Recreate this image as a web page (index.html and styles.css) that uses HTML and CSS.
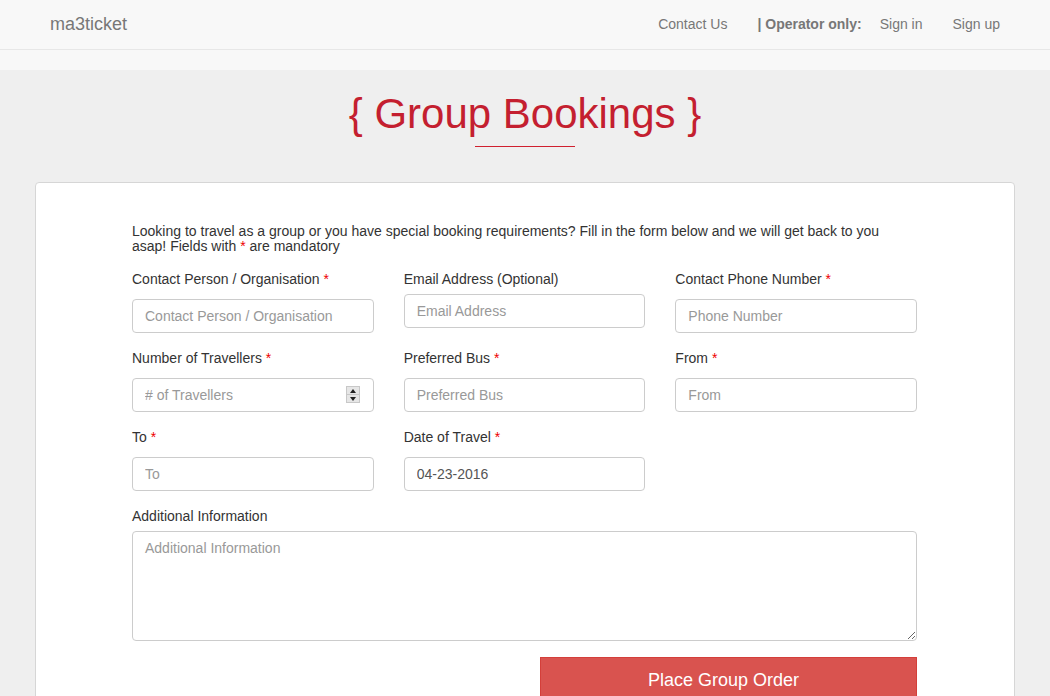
FILE: index.html
```html
<!DOCTYPE html>
<html lang="en">
<head>
<meta charset="utf-8">
<title>Group Bookings - ma3ticket</title>
<link rel="stylesheet" href="styles.css">
</head>
<body>
<nav class="navbar">
  <a class="brand" href="#">ma3ticket</a>
  <div class="nav-right">
    <a class="nav-link" href="#">Contact Us</a>
    <span class="nav-text">| Operator only:</span>
    <a class="nav-link" href="#">Sign in</a>
    <a class="nav-link" href="#">Sign up</a>
  </div>
</nav>
<main class="main">
  <h1 class="title">{ Group Bookings }</h1>
  <div class="title-rule"></div>
  <section class="card">
    <form class="form">
      <p class="intro">Looking to travel as a group or you have special booking requirements? Fill in the form below and we will get back to you asap! Fields with <span class="star">*</span> are mandatory</p>
      <div class="grid">
        <div class="field">
          <label class="label">Contact Person / Organisation <span class="req">*</span></label>
          <input class="control" type="text" placeholder="Contact Person / Organisation">
        </div>
        <div class="field">
          <label class="label">Email Address (Optional)</label>
          <input class="control" type="text" placeholder="Email Address">
        </div>
        <div class="field">
          <label class="label">Contact Phone Number <span class="req">*</span></label>
          <input class="control" type="text" placeholder="Phone Number">
        </div>
        <div class="field">
          <label class="label">Number of Travellers <span class="req">*</span></label>
          <div class="spin-wrap">
            <input class="control" type="text" placeholder="# of Travellers">
            <span class="spinner"><span class="spin-up"></span><span class="spin-down"></span></span>
          </div>
        </div>
        <div class="field">
          <label class="label">Preferred Bus <span class="req">*</span></label>
          <input class="control" type="text" placeholder="Preferred Bus">
        </div>
        <div class="field">
          <label class="label">From <span class="req">*</span></label>
          <input class="control" type="text" placeholder="From">
        </div>
        <div class="field">
          <label class="label">To <span class="req">*</span></label>
          <input class="control" type="text" placeholder="To">
        </div>
        <div class="field">
          <label class="label">Date of Travel <span class="req">*</span></label>
          <input class="control" type="text" value="04-23-2016">
        </div>
        <div class="field"></div>
        <div class="field full">
          <label class="label">Additional Information</label>
          <textarea class="control area" placeholder="Additional Information"></textarea>
        </div>
      </div>
      <div class="actions">
        <button class="btn" type="button">Place Group Order</button>
      </div>
    </form>
  </section>
</main>
</body>
</html>
```
FILE: styles.css
```css
* { box-sizing: border-box; }
html, body { margin: 0; padding: 0; }
body {
  font-family: "Liberation Sans", Arial, sans-serif;
  font-size: 14px;
  color: #333;
  background: #f8f8f8;
  overflow: hidden;
}
.navbar {
  height: 50px;
  background: #f8f8f8;
  border-bottom: 1px solid #e7e7e7;
  display: flex;
  align-items: center;
  justify-content: space-between;
  padding: 0 35px 1px 50px;
  margin-bottom: 20px;
}
.brand {
  font-size: 18px;
  color: #777;
  text-decoration: none;
  line-height: 20px;
}
.nav-right {
  display: flex;
  align-items: center;
}
.nav-link {
  color: #777;
  text-decoration: none;
  padding: 0 15px;
  line-height: 20px;
}
.nav-text {
  color: #777;
  font-weight: bold;
  margin-left: 15px;
  padding-right: 3px;
  line-height: 20px;
}
.main {
  background: #efefef;
  padding: 1px 35px 0;
  min-height: 700px;
}
.title {
  margin: 20px 0 0;
  text-align: center;
  font-weight: normal;
  font-size: 42px;
  line-height: 46px;
  color: #c41f30;
}
.title-rule {
  width: 100px;
  height: 1px;
  background: #d0202f;
  margin: 9px auto 0;
}
.card {
  margin-top: 35px;
  background: #fff;
  border: 1px solid #d6d6d6;
  border-radius: 4px;
  padding: 41px 0 0 96px;
  min-height: 560px;
}
.form {
  width: 785px;
}
.intro {
  margin: 0 0 15px;
  line-height: 15px;
}
.star, .req { color: #e00; }
.req {
  display: inline-block;
  padding-bottom: 5px;
}
.grid {
  display: grid;
  grid-template-columns: repeat(3, 1fr);
  column-gap: 30px;
}
.field { margin-bottom: 15px; }
.field.full { grid-column: 1 / -1; }
.label {
  display: block;
  line-height: 20px;
  margin-bottom: 5px;
}
.control {
  display: block;
  width: 100%;
  height: 34px;
  padding: 6px 12px;
  font-family: "Liberation Sans", Arial, sans-serif;
  font-size: 14px;
  line-height: 20px;
  color: #555;
  background: #fff;
  border: 1px solid #ccc;
  border-radius: 4px;
  outline: none;
}
.control::placeholder { color: #999; }
.area {
  height: 110px;
  resize: vertical;
}
.spin-wrap { position: relative; }
.spinner {
  position: absolute;
  right: 14px;
  top: 8px;
  width: 14px;
  height: 17px;
  background: #e6e6e6;
  border: 1px solid #c8c8c8;
  display: flex;
  flex-direction: column;
}
.spin-up, .spin-down {
  flex: 1;
  position: relative;
}
.spin-up { border-bottom: 1px solid #c8c8c8; }
.spin-up::after, .spin-down::after {
  content: "";
  position: absolute;
  left: 3px;
  width: 0;
  height: 0;
  border-left: 3.5px solid transparent;
  border-right: 3.5px solid transparent;
}
.spin-up::after { top: 2px; border-bottom: 4px solid #222; }
.spin-down::after { top: 2px; border-top: 4px solid #222; }
.actions {
  display: flex;
  justify-content: flex-end;
  margin-top: 1px;
}
.btn {
  width: 377px;
  height: 46px;
  padding: 10px 26px 10px 16px;
  font-family: "Liberation Sans", Arial, sans-serif;
  font-size: 18px;
  line-height: 24px;
  color: #fff;
  background: #d9534f;
  border: 1px solid #d43f3a;
  border-radius: 0;
}
```
